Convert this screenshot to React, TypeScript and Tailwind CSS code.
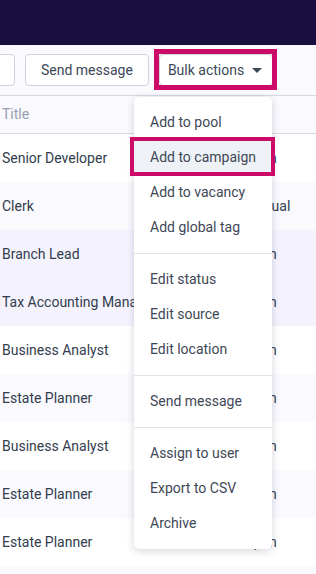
import React from 'react'

const rows = [
  { title: 'Senior Developer', source: 'Open', bg: 'bg-white' },
  { title: 'Clerk', source: 'Manual', bg: 'bg-[#f9f9fe]' },
  { title: 'Branch Lead', source: 'Open', bg: 'bg-[#f4f3fd]' },
  { title: 'Tax Accounting Manager', source: 'Open', bg: 'bg-[#f4f3fd]' },
  { title: 'Business Analyst', source: 'Open', bg: 'bg-white' },
  { title: 'Estate Planner', source: 'Open', bg: 'bg-[#f9f9fe]' },
  { title: 'Business Analyst', source: 'Open', bg: 'bg-white' },
  { title: 'Estate Planner', source: 'Open', bg: 'bg-[#f9f9fe]' },
  { title: 'Estate Planner', source: 'Open', bg: 'bg-white' },
  { title: 'Estate Planner', source: 'Open', bg: 'bg-[#f9f9fe]' },
]

const groups = [
  ['Add to pool', 'Add to campaign', 'Add to vacancy', 'Add global tag'],
  ['Edit status', 'Edit source', 'Edit location'],
  ['Send message'],
  ['Assign to user', 'Export to CSV', 'Archive'],
]

const App = () => {
  const style = {
    btn: `h-[32px] flex items-center rounded-[4px] border border-[#cdd4de] bg-white text-[14px] text-[#3c4758]`,
    item: `relative h-[35px] flex items-center px-4 text-[14px] text-[#3e4756] whitespace-nowrap`,
  }

  return (
    <div className="relative w-[316px] h-[574px] overflow-hidden bg-white font-['Roboto',sans-serif]">
      <div className="h-[45px] bg-[#180f3f]" />

      {/* toolbar */}
      <div className="h-[51px] bg-[#f9f9fe] border-b border-[#d3d9e2] flex items-start pt-[9px]">
        <div className={`${style.btn} w-[40px] ml-[-25px]`} />
        <button className={`${style.btn} ml-[10px] px-[15px]`}>Send message</button>
        <div className="relative ml-[10px]">
          <button className={`${style.btn} w-[114px] pl-[8px] pr-[10px] justify-between`}>
            <span>Bulk actions</span>
            <svg width="10" height="5" viewBox="0 0 10 5">
              <path d="M0 0 L10 0 L5 5 Z" fill="#3c4758" />
            </svg>
          </button>
          <span className="absolute left-[-5px] right-[-4px] top-[-5px] bottom-[-4px] border-[5px] border-[#cc0b68]" />
        </div>
      </div>

      {/* table */}
      <div className="h-[38px] bg-[#f9f9fe] border-b border-[#d3d9e2] flex items-center pl-[2px] text-[14px] text-[#97a0b0]">
        Title
      </div>
      {rows.map((r, i) => (
        <div key={i} className={`h-[48px] flex items-center text-[14px] text-[#323c4c] ${r.bg}`}>
          <div className="w-[244px] pl-[2px] whitespace-nowrap overflow-hidden">{r.title}</div>
          <div className="whitespace-nowrap">{r.source}</div>
        </div>
      ))}

      {/* bulk actions menu */}
      <div className="absolute left-[134px] top-[97px] w-[138px] rounded-[5px] bg-white shadow-[0_2px_8px_rgba(30,30,60,0.18)]">
        {groups.map((g, gi) => (
          <div key={gi} className={`py-2 ${gi > 0 ? 'border-t border-[#dde3ea]' : ''}`}>
            {g.map((label) =>
              label === 'Add to campaign' ? (
                <div key={label} className={`${style.item} bg-[#eef2f6]`}>
                  {label}
                  <span className="absolute left-[-4px] right-[-3px] top-[-3px] bottom-[-1px] border-4 border-[#cc0b68]" />
                </div>
              ) : (
                <div key={label} className={style.item}>
                  {label}
                </div>
              ),
            )}
          </div>
        ))}
      </div>
    </div>
  )
}

export default App
